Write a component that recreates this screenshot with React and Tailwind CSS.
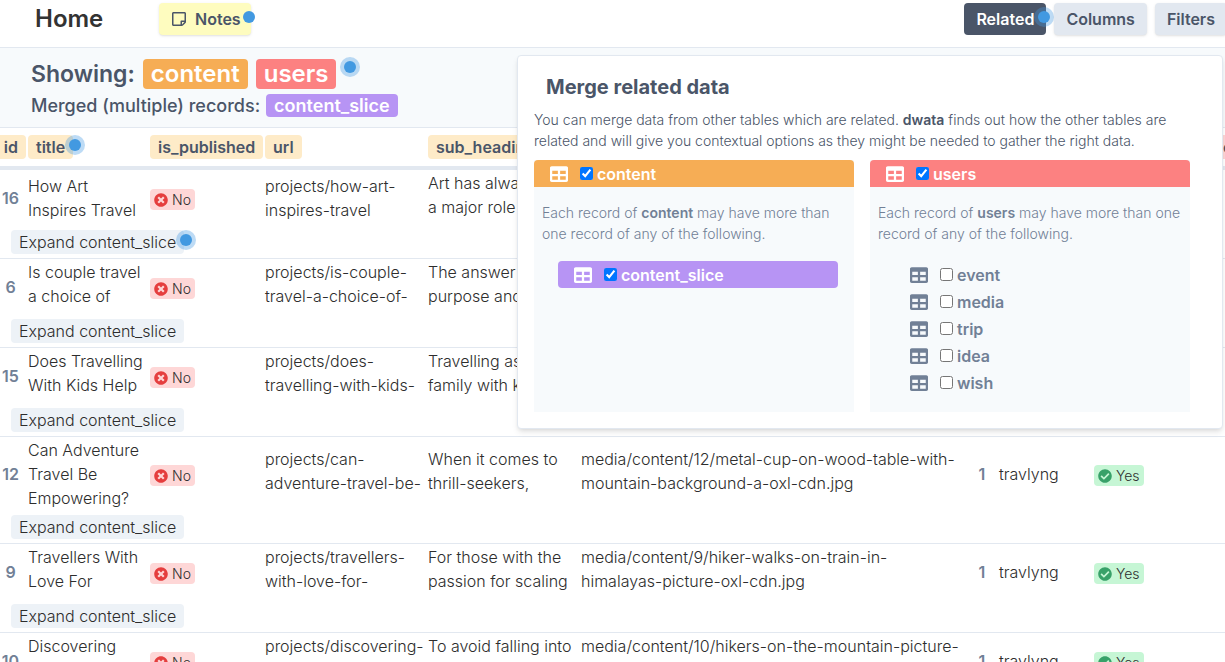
import { Fragment } from "react";
import { FaCheckCircle, FaRegStickyNote, FaTable, FaTimesCircle } from "react-icons/fa";

const records = [
  {
    id: 16,
    title: ["How Art", "Inspires Travel"],
    url: ["projects/how-art-", "inspires-travel"],
    sub: ["Art has always", "a major role in"],
    clamp: false,
    media: ["media/content/16/", "art-oxl-cdn.jpg"],
  },
  {
    id: 6,
    title: ["Is couple travel", "a choice of"],
    url: ["projects/is-couple-", "travel-a-choice-of-"],
    sub: ["The answer is", "purpose and"],
    clamp: true,
    media: ["media/content/6/", "couple-oxl-cdn.jpg"],
  },
  {
    id: 15,
    title: ["Does Travelling", "With Kids Help"],
    url: ["projects/does-", "travelling-with-kids-"],
    sub: ["Travelling as a", "family with kids"],
    clamp: true,
    media: ["media/content/15/", "kids-oxl-cdn.jpg"],
  },
  {
    id: 12,
    title: ["Can Adventure", "Travel Be", "Empowering?"],
    url: ["projects/can-", "adventure-travel-be-"],
    sub: ["When it comes to", "thrill-seekers,"],
    clamp: false,
    media: ["media/content/12/metal-cup-on-wood-table-with-", "mountain-background-a-oxl-cdn.jpg"],
  },
  {
    id: 9,
    title: ["Travellers With", "Love For"],
    url: ["projects/travellers-", "with-love-for-"],
    sub: ["For those with the", "passion for scaling"],
    clamp: true,
    media: ["media/content/9/hiker-walks-on-train-in-", "himalayas-picture-oxl-cdn.jpg"],
  },
  {
    id: 10,
    title: ["Discovering", "Yourself Through"],
    url: ["projects/discovering-", "yourself-through-"],
    sub: ["To avoid falling into", "the routine of"],
    clamp: true,
    media: ["media/content/10/hikers-on-the-mountain-picture-", "oxl-cdn.jpg"],
  },
];

function Dot({ className = "", halo = true }) {
  return (
    <span
      className={`block size-3 rounded-full bg-[#4299e1] ${halo ? "ring-4 ring-[#4299e1]/35" : ""} ${className}`}
    />
  );
}

function Lines({ lines, clamp = true }) {
  return (
    <div className={clamp ? "pb-1.5" : ""}>
      {lines.map((line) => (
        <span key={line} className="block whitespace-nowrap">
          {line}
        </span>
      ))}
    </div>
  );
}

function Badge({ yes }) {
  return (
    <span
      className={`inline-flex h-[21px] items-center gap-1 rounded px-1 align-middle text-[14px] leading-[21px] ${
        yes ? "bg-[#c6f6d5]" : "bg-[#fed7d7]"
      }`}
    >
      {yes ? <FaCheckCircle className="size-3.5 text-[#38a169]" /> : <FaTimesCircle className="size-3.5 text-[#e53e3e]" />}
      {yes ? "Yes" : "No"}
    </span>
  );
}

function HeadCell({ children, users = false, dot = false }) {
  return (
    <th className="px-px py-[7px] text-left font-semibold">
      <span
        className={`relative block w-max rounded px-2 text-[#4a5568] ${users ? "bg-[#fed7d7]" : "bg-[#feebc8]"}`}
      >
        {children}
        {dot && <Dot className="absolute top-1 -right-2" />}
      </span>
    </th>
  );
}

function DataTable() {
  return (
    <div className="overflow-hidden">
      <table className="w-[1400px] table-fixed border-collapse text-[16px] leading-6 font-[350]">
        <colgroup>
          <col className="w-[27px]" />
          <col className="w-[122px]" />
          <col className="w-[115px]" />
          <col className="w-[163px]" />
          <col className="w-[153px]" />
          <col className="w-[386px]" />
          <col className="w-[32px]" />
          <col className="w-[95px]" />
          <col className="w-[121px]" />
          <col />
        </colgroup>
        <thead>
          <tr className="border-b-4 border-[#e2e8f0]">
            <th className="py-[7px] pr-px font-semibold">
              <span className="flex justify-end">
                <span className="rounded bg-[#feebc8] px-2 text-[#4a5568]">id</span>
              </span>
            </th>
            <HeadCell dot>title</HeadCell>
            <HeadCell>is_published</HeadCell>
            <HeadCell>url</HeadCell>
            <HeadCell>sub_heading</HeadCell>
            <HeadCell>main_image</HeadCell>
            <HeadCell users>id</HeadCell>
            <HeadCell users>name</HeadCell>
            <HeadCell users>is_active</HeadCell>
            <HeadCell users>email</HeadCell>
          </tr>
        </thead>
        <tbody>
          {records.map((record, index) => (
            <Fragment key={record.id}>
              <tr>
                <td className="pr-1.5 text-center font-semibold text-[#718096]">{record.id}</td>
                <td className="p-px">
                  <Lines lines={record.title} clamp={record.clamp} />
                </td>
                <td className="px-px">
                  <Badge />
                </td>
                <td className="p-px">
                  <Lines lines={record.url} clamp={index !== 0} />
                </td>
                <td className="p-px">
                  <Lines lines={record.sub} />
                </td>
                <td className="p-px">
                  <Lines lines={record.media} />
                </td>
                <td className="text-center font-semibold text-[#718096]">1</td>
                <td className="px-px">travlyng</td>
                <td className="px-px">
                  <Badge yes />
                </td>
                <td />
              </tr>
              <tr className="border-b border-[#e2e8f0]">
                <td colSpan={10} className="py-1 pl-[11px]">
                  <button type="button" className="relative block h-6 rounded bg-[#edf2f7] px-2">
                    Expand content_slice
                    {index === 0 && <Dot className="absolute top-1 -right-2" />}
                  </button>
                </td>
              </tr>
            </Fragment>
          ))}
        </tbody>
      </table>
    </div>
  );
}

function TableOption({ name, checked = false, className = "" }) {
  return (
    <label className={`flex h-[27px] items-center px-4 text-[16px] font-semibold ${className}`}>
      <FaTable className="mr-3 size-[18px]" />
      <input type="checkbox" defaultChecked={checked} className="mr-1 size-[13px]" />
      {name}
    </label>
  );
}

function MergePanel({ name, headClass, children }) {
  return (
    <section className="w-80 bg-[#f7fafc] pb-4">
      <TableOption name={name} checked className={`rounded-t text-white ${headClass}`} />
      <p className="pt-[15px] pb-[17px] pl-2 text-[14px] leading-[21px] font-[350] text-[#718096]">
        Each record of <strong className="font-semibold">{name}</strong> may have more than{" "}
        {name === "content" && <br />}
        one record of any of the following.
      </p>
      <div className="pr-4 pl-6 text-[#718096]">{children}</div>
    </section>
  );
}

function MergePopup() {
  return (
    <div className="absolute top-[55px] right-[2px] z-10 w-[706px] rounded border border-[#e2e8f0] bg-white px-4 pb-4 shadow-md">
      <h3 className="px-3 pt-4 text-[20px] leading-[30px] font-bold text-[#4a5568]">Merge related data</h3>
      <p className="pt-[7px] pb-[9px] text-[14px] leading-[21px] font-[350] text-[#4a5568]">
        You can merge data from other tables which are related. <strong className="font-semibold">dwata</strong> finds
        out how the other tables are
        <br />
        related and will give you contextual options as they might be needed to gather the right data.
      </p>
      <div className="flex gap-4">
        <MergePanel name="content" headClass="bg-[#f6ad55]">
          <TableOption name="content_slice" checked className="rounded bg-[#b794f4] text-white" />
        </MergePanel>
        <MergePanel name="users" headClass="bg-[#fc8181]">
          {["event", "media", "trip", "idea", "wish"].map((name) => (
            <TableOption key={name} name={name} />
          ))}
        </MergePanel>
      </div>
    </div>
  );
}

export default function App() {
  return (
    <div className="relative h-screen overflow-hidden bg-white font-['Inter',sans-serif] text-[#2d2d2d]">
      <header className="flex h-12 items-start border-b border-[#e2e8f0] pt-[3px] text-[16px] leading-8 font-semibold text-[#4a5568]">
        <h1 className="w-[159px] pl-[35px] text-[24px] text-[#333333]">Home</h1>
        <button type="button" className="relative flex h-8 items-center gap-2 rounded bg-[#fefcbf] pr-2.5 pl-3 shadow">
          <FaRegStickyNote className="size-4" />
          Notes
          <Dot halo={false} className="absolute top-2 -right-1" />
        </button>
        <nav className="-mr-0.5 ml-auto flex gap-2">
          <button type="button" className="relative h-8 rounded bg-[#4a5568] px-3 text-white">
            Related
            <Dot className="absolute top-2 -right-1" />
          </button>
          <button type="button" className="h-8 rounded bg-[#e2e8f0] px-3 shadow">
            Columns
          </button>
          <button type="button" className="h-8 rounded bg-[#e2e8f0] px-3 shadow">
            Filters
          </button>
        </nav>
      </header>
      <section className="border-b border-[#e2e8f0] bg-[#f7fafc] pt-[11px] pb-[10px] pl-[31px] text-[#4a5568]">
        <h2 className="flex gap-2 text-[24px] leading-[30px] font-semibold">
          <span className="text-[23px]">Showing:</span>
          <span className="rounded bg-[#f6ad55] px-2 text-white">content</span>
          <span className="rounded bg-[#fc8181] px-2 text-white">users</span>
          <Dot className="mt-0.5" />
        </h2>
        <p className="flex gap-1.5 pt-[5px] text-[18px] leading-[23px] font-medium">
          Merged (multiple) records:
          <span className="rounded bg-[#b794f4] px-2 font-semibold text-white">content_slice</span>
        </p>
      </section>
      <DataTable />
      <MergePopup />
    </div>
  );
}
